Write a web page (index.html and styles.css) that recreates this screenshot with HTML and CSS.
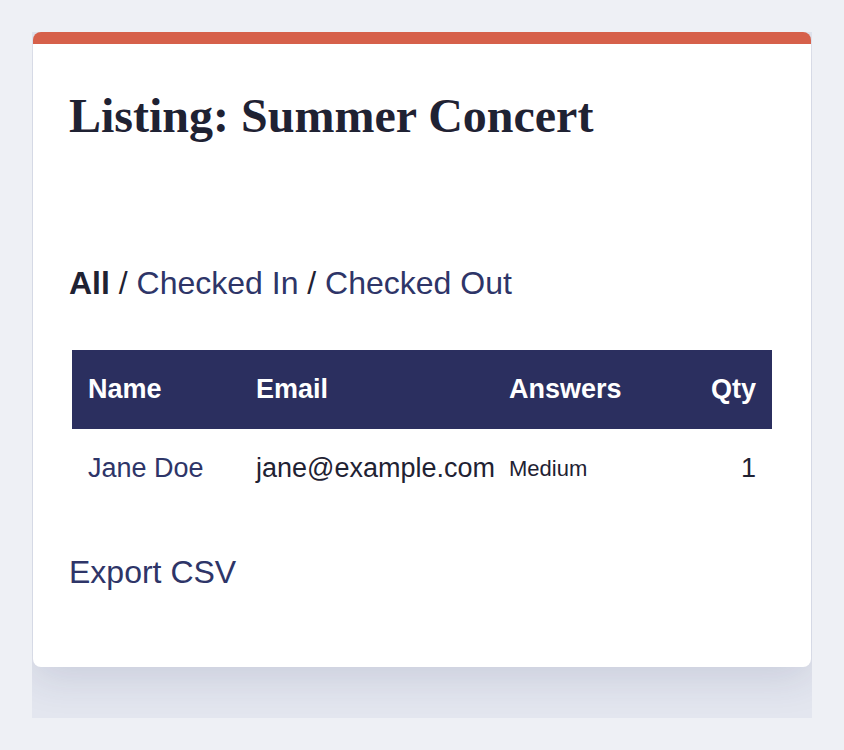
FILE: index.html
```html
<!DOCTYPE html>
<html lang="en">
<head>
    <meta charset="UTF-8">
    <meta name="viewport" content="width=device-width, initial-scale=1.0">
    <title>Listing: Summer Concert</title>
    <link rel="stylesheet" href="styles.css">
</head>
<body>
    <div class="page">
        <div class="card">
            <h1>Listing: Summer Concert</h1>

            <div class="filters">
                <strong>All</strong> / <a href="#">Checked In</a> / <a href="#">Checked Out</a>
            </div>

            <table class="guests">
                <thead>
                    <tr>
                        <th class="col-name">Name</th>
                        <th class="col-email">Email</th>
                        <th class="col-answers">Answers</th>
                        <th class="col-qty">Qty</th>
                    </tr>
                </thead>
                <tbody>
                    <tr>
                        <td><a href="#">Jane Doe</a></td>
                        <td class="email">jane@example.com</td>
                        <td class="answers">Medium</td>
                        <td class="qty">1</td>
                    </tr>
                </tbody>
            </table>

            <a class="export" href="#">Export CSV</a>
        </div>
    </div>
</body>
</html>
```

FILE: styles.css
```css
/* base */
body {
    margin: 0;
    padding: 0;
    font-family: "Liberation Sans", Arial, sans-serif;
    background: #eef0f5;
    color: #1f2233;
}

a {
    color: #2e3568;
    text-decoration: none;
}

/* wrapper clips the card shadow */
.page {
    width: 780px;
    margin: 32px;
    padding: 0 1px 51px;
    box-sizing: border-box;
    background: #e3e6ef;
    overflow: hidden;
}

.card {
    background: #ffffff;
    border-top: 12px solid #d6604a;
    border-radius: 8px;
    padding: 44px 36px 76px;
    box-shadow: 0 10px 40px rgba(40, 50, 100, 0.14);
}

.card h1 {
    margin: 0 0 122px;
    font-family: "Liberation Serif", "Times New Roman", serif;
    font-size: 48px;
    font-weight: 700;
    color: #1f2233;
}

.filters {
    font-size: 32px;
    margin-bottom: 48px;
}

.filters strong {
    font-weight: 700;
}

/* table */
.guests {
    width: 700px;
    margin: 0 3px;
    table-layout: fixed;
    border-spacing: 0;
    font-size: 27px;
}

.guests th {
    background: #2b2f5f;
    color: #ffffff;
    text-align: left;
    font-weight: 700;
    padding: 24px 16px;
}

.guests td {
    padding: 24px 16px;
    white-space: nowrap;
}

.col-name {
    width: 136px;
}

.col-email {
    width: 221px;
}

.col-answers {
    width: 155px;
}

.guests .col-qty,
.guests .qty {
    text-align: right;
}

.guests .answers {
    font-size: 22px;
}

.export {
    display: inline-block;
    margin-top: 46px;
    font-size: 32px;
}
```
